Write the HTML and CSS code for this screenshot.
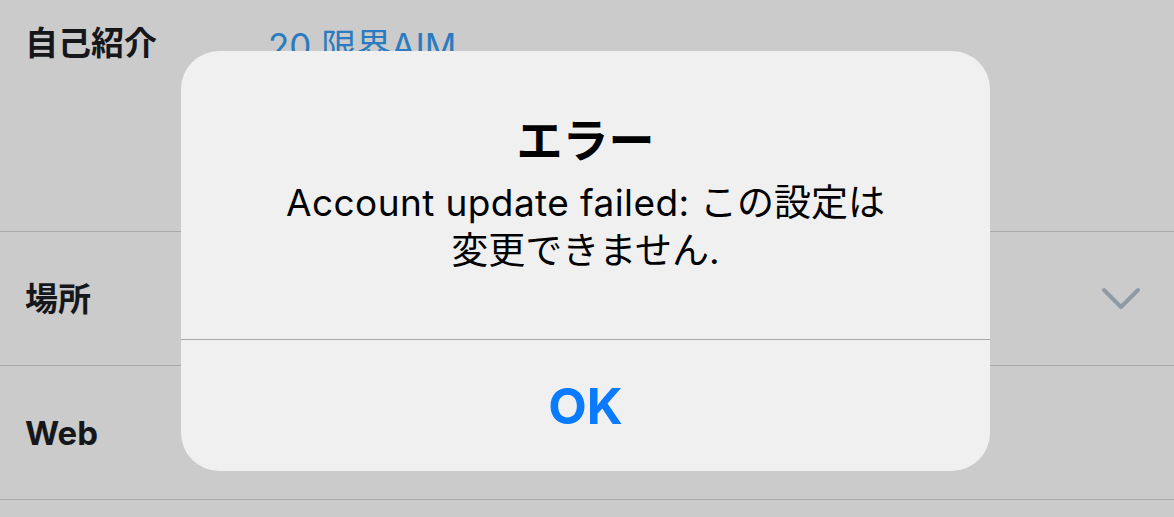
FILE: index.html
```html
<!DOCTYPE html>
<html lang="ja">
<head>
<meta charset="utf-8">
<title>エラー</title>
<link rel="stylesheet" href="styles.css">
</head>
<body>
<div class="list">
  <div class="row row-bio">
    <div class="label">自己紹介</div>
    <div class="value">20 限界AIM</div>
  </div>
  <div class="row row-mid">
    <div class="label">場所</div>
    <svg class="chevron" width="40" height="24" viewBox="0 0 40 24"><polyline points="4,3 21,20 38,3" fill="none" stroke="#8e9ba5" stroke-width="4" stroke-linecap="round" stroke-linejoin="round"/></svg>
  </div>
  <div class="row row-mid">
    <div class="label">Web</div>
  </div>
  <div class="row row-last"></div>
</div>

<div class="alert">
  <div class="alert-body">
    <div class="alert-title">エラー</div>
    <div class="alert-msg"><span class="latin">Account update failed:</span> この設定は<br>変更できません.</div>
  </div>
  <div class="alert-btn">OK</div>
</div>
</body>
</html>
```
FILE: styles.css
```css
html, body {
  margin: 0;
  padding: 0;
}
body {
  width: 1174px;
  height: 517px;
  overflow: hidden;
  background: #cbcbcb;
  font-family: "Inter", "Noto Sans CJK JP", sans-serif;
  color: #111;
}
.list {
  display: flex;
  flex-direction: column;
}
.row {
  display: flex;
  padding-left: 25px;
  padding-right: 34px;
  border-bottom: 1px solid #a9a9a9;
}
.row-bio {
  height: 208px;
  padding-top: 23px;
  align-items: flex-start;
}
.row-mid {
  height: 133px;
  align-items: center;
}
.row-last {
  height: 40px;
  border-bottom: none;
}
.label {
  width: 243px;
  font-size: 33px;
  font-weight: 700;
  line-height: 40px;
  color: #16171a;
}
.value {
  font-size: 35px;
  line-height: 40px;
  margin-top: 3px;
  color: #2b7bc0;
}
.chevron {
  margin-left: auto;
}
.alert {
  position: absolute;
  left: 181px;
  top: 51px;
  width: 809px;
  height: 420px;
  background: #f0f0f0;
  border-radius: 38px;
  display: flex;
  flex-direction: column;
  overflow: hidden;
}
.alert-body {
  height: 288px;
  border-bottom: 1px solid #a8a8a8;
  display: flex;
  flex-direction: column;
  justify-content: center;
  align-items: center;
  text-align: center;
}
.alert-title {
  font-size: 46px;
  font-weight: 700;
  line-height: 50px;
  color: #000;
  margin-bottom: 14px;
}
.alert-msg {
  font-size: 37px;
  line-height: 48px;
  color: #000;
}
.latin {
  letter-spacing: 0.4px;
}
.alert-btn {
  flex: 1;
  display: flex;
  align-items: center;
  justify-content: center;
  font-size: 50px;
  font-weight: 700;
  color: #0a7aff;
}
```
